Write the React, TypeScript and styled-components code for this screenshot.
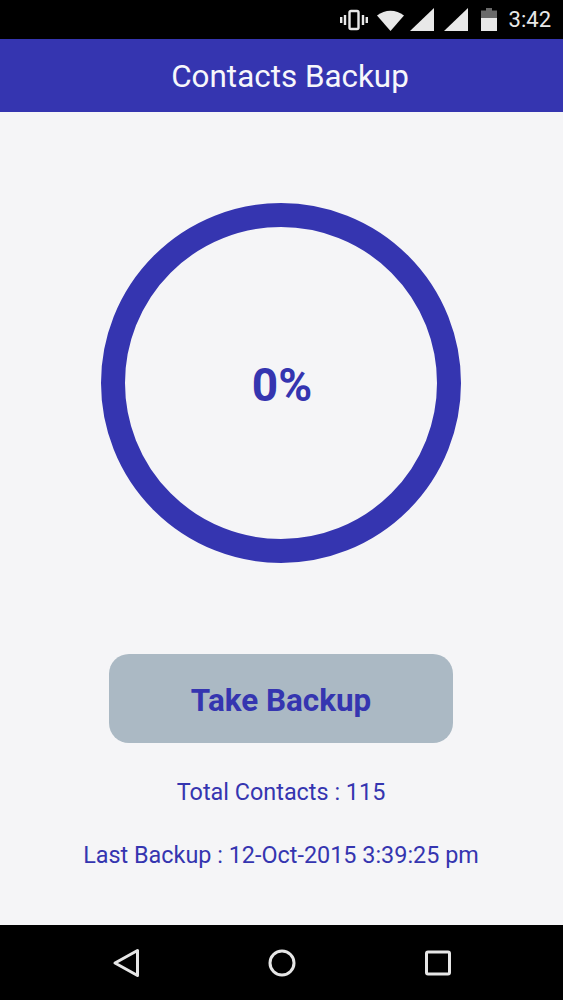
import React from "react";
import styled, { createGlobalStyle } from "styled-components";

const Global = createGlobalStyle`
  html, body { margin: 0; padding: 0; background: #f5f5f7; }
  #root { width: 563px; height: 1000px; }
  * { box-sizing: border-box; }
`;

const Screen = styled.div`
  width: 563px;
  height: 1000px;
  display: flex;
  flex-direction: column;
  font-family: Roboto, "Liberation Sans", sans-serif;
  color: #3535b0;
  background: #f5f5f7;
  overflow: hidden;
`;

const StatusBar = styled.div`
  height: 39px;
  flex: none;
  background: #000;
  display: flex;
  align-items: center;
  justify-content: flex-end;
  padding-right: 12px;
  color: #e8e8e8;
`;

const StatusIcon = styled.svg<{ $gap?: number }>`
  display: block;
  flex: none;
  margin-right: ${(p) => p.$gap ?? 0}px;
`;

const Clock = styled.span`
  font-size: 22px;
  line-height: 24px;
  margin-left: 12px;
`;

const AppBar = styled.header`
  height: 73px;
  flex: none;
  background: #3535b0;
  color: #f7f7fb;
  display: flex;
  align-items: center;
  justify-content: center;
  padding: 2px 0 0 17px;
  font-size: 31.4px;
`;

const Content = styled.main`
  flex: 1;
  display: flex;
  flex-direction: column;
  align-items: center;
  padding-right: 1px;
`;

const Ring = styled.div`
  width: 360px;
  height: 360px;
  margin-top: 91px;
  border: 24px solid #3535b0;
  border-radius: 50%;
  display: flex;
  align-items: center;
  justify-content: center;
  padding: 3px 0 0 2px;
  font-size: 46px;
  font-weight: 700;
`;

const BackupButton = styled.button`
  width: 344px;
  height: 89px;
  margin-top: 91px;
  border: none;
  border-radius: 20px;
  background: #abb9c4;
  color: #3535b0;
  font-family: inherit;
  font-size: 31.4px;
  font-weight: 700;
  padding: 3px 0 0;
`;

const Info = styled.p<{ $top: number }>`
  margin: ${(p) => p.$top}px 0 0;
  font-size: 23.4px;
  line-height: 28px;
`;

const NavBar = styled.nav`
  height: 75px;
  flex: none;
  background: #000;
  display: flex;
  align-items: center;
  justify-content: center;
  gap: 128px;
`;

const NavIcon = styled.svg`
  display: block;
  width: 28px;
  height: 30px;
  fill: none;
  stroke: #e6e6e6;
  stroke-width: 3;
  stroke-linejoin: round;
`;

export default function App() {
  return (
    <Screen>
      <Global />
      <StatusBar>
        <StatusIcon width="28" height="22" viewBox="0 0 28 22" $gap={9} fill="none" stroke="currentColor">
          <rect x="9.5" y="2" width="9" height="18" rx="1.5" strokeWidth="2.4" />
          <path d="M5 6v10M1.2 8v6M23 6v10M26.8 8v6" strokeWidth="2.4" />
        </StatusIcon>
        <StatusIcon width="27" height="22" viewBox="0 0 27 22" $gap={6}>
          <path d="M0 6.5C8 0 19 0 27 6.5L13.5 22Z" fill="currentColor" />
        </StatusIcon>
        <StatusIcon width="24" height="23" viewBox="0 0 24 23" $gap={10}>
          <path d="M24 0V23H0Z" fill="currentColor" />
        </StatusIcon>
        <StatusIcon width="24" height="23" viewBox="0 0 24 23" $gap={13}>
          <path d="M24 0V23H0Z" fill="currentColor" />
        </StatusIcon>
        <StatusIcon width="16" height="23" viewBox="0 0 16 23">
          <path d="M5 0h6v2.5h5V23H0V2.5h5Z" fill="#6a6a6a" />
          <path d="M0 10h16v13H0Z" fill="currentColor" />
        </StatusIcon>
        <Clock>3:42</Clock>
      </StatusBar>
      <AppBar>Contacts Backup</AppBar>
      <Content>
        <Ring>0%</Ring>
        <BackupButton>Take Backup</BackupButton>
        <Info $top={35}>Total Contacts : 115</Info>
        <Info $top={35}>Last Backup : 12-Oct-2015 3:39:25 pm</Info>
      </Content>
      <NavBar>
        <NavIcon viewBox="0 0 28 30">
          <path d="M25.5 2.5V27.5L3 15Z" />
        </NavIcon>
        <NavIcon viewBox="0 0 28 30">
          <circle cx="14" cy="15" r="12" />
        </NavIcon>
        <NavIcon viewBox="0 0 28 30">
          <rect x="2.5" y="4" width="23" height="22" rx="1.5" />
        </NavIcon>
      </NavBar>
    </Screen>
  );
}
